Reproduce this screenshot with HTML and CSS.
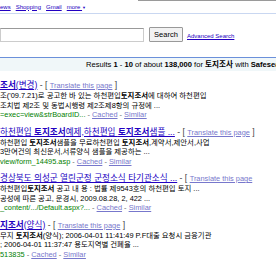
FILE: index.html
```html
<!DOCTYPE html>
<html lang="ko">

<head>
    <meta charset="utf-8">
    <title>토지조사 - Google Search</title>
    <link rel="stylesheet" href="styles.css">
</head>

<body>

    <!-- top links -->
    <div class="gbar">
        <a href="#">ews</a>
        <a href="#">Shopping</a>
        <a href="#">Gmail</a>
        <a href="#" class="more">more <span class="arrow">▼</span></a>
    </div>

    <!-- search box -->
    <form class="search-row" onsubmit="return false">
        <input class="q" type="text" value="">
        <button class="btn" type="submit">Search</button>
        <a href="#" class="adv">Advanced Search</a>
    </form>

    <!-- result count bar -->
    <div class="ssb">
        Results <b>1</b> - <b>10</b> of about <b>138,000</b> for <b>토지조사</b> with <b>Safesea</b>
    </div>

    <!-- results -->
    <ol class="results">
        <li class="res">
            <div class="title"><a href="#"><b>조서</b>(변경)</a> - [ <a href="#" class="fl">Translate this page</a> ]</div>
            <div class="snip">조('09.7.21)로 공고한 바 있는 하천편입<b>토지조서</b>에 대하여 하천편입<br>조치법 제2조 및 동법시행령 제2조제8항의 규정에 ...</div>
            <div class="url"><span class="green">=exec=view&amp;strBoardID...</span> - <a href="#" class="fl">Cached</a> - <a href="#" class="fl">Similar</a></div>
        </li>
        <li class="res">
            <div class="title"><a href="#">하천편입 <b>토지조서</b>예제,하천편입 <b>토지조서</b>샘플 ...</a> - [ <a href="#" class="fl">Translate this page</a> ]</div>
            <div class="snip">하천편입 <b>토지조서</b>샘플을 무료하천편입 <b>토지조서</b>,계약서,제안서,사업<br>3만여건의 최신문서,서류양식 샘플을 제공하는 ...</div>
            <div class="url"><span class="green">view/form_14495.asp</span> - <a href="#" class="fl">Cached</a> - <a href="#" class="fl">Similar</a></div>
        </li>
        <li class="res">
            <div class="title"><a href="#">경상북도 의성군 열린군정 군정소식 타기관소식 ...</a> - [ <a href="#" class="fl">Translate this page</a></div>
            <div class="snip">하천편입<b>토지조서</b> 공고 내 용 : 법률 제9543호의 하천편입 토지 ...<br>공성에 따른 공고, 문경시, 2009.08.28, 2, 422 ...</div>
            <div class="url"><span class="green">_content/.../Default.aspx?...</span> - <a href="#" class="fl">Cached</a> - <a href="#" class="fl">Similar</a></div>
        </li>
        <li class="res">
            <div class="title"><a href="#"><b>지조서</b>(양식)</a> - [ <a href="#" class="fl">Translate this page</a> ]</div>
            <div class="snip">무지 <b>토지조서</b>(양식); 2006-04-01 11:41:49 P.F대출 요청시 금융기관<br>; 2006-04-01 11:37:47 용도지역별 건폐율 ...</div>
            <div class="url"><span class="green">513835</span> - <a href="#" class="fl">Cached</a> - <a href="#" class="fl">Similar</a></div>
        </li>
    </ol>

</body>

</html>
```

FILE: styles.css
```css
* {
    box-sizing: border-box;
}

body {
    margin: 0;
    padding: 0;
    width: 276px;
    height: 260px;
    overflow: hidden;
    background: #fff;
    color: #000;
    font-family: "Liberation Sans", "Noto Sans CJK KR", sans-serif;
}

a {
    color: #2200c1;
}

/* top links */
.gbar {
    height: 14px;
    border-bottom: 1px solid #c9d7f1;
    background: linear-gradient(#9a9a9a, #9a9a9a) no-repeat 138px 0 / 100% 1px;
    display: flex;
    align-items: center;
    gap: 5px;
    font-size: 6px;
    white-space: nowrap;
}

.gbar a {
    color: #2200c1;
}

.gbar .arrow {
    font-size: 4px;
    text-decoration: none;
    display: inline-block;
}

/* search box */
.search-row {
    margin: 13px 0 0;
    display: flex;
    align-items: center;
    height: 15px;
    white-space: nowrap;
}

.q {
    width: 144px;
    height: 14px;
    margin: 0;
    padding: 0;
    border: 1px solid #ccc;
    border-top-color: #999;
}

.btn {
    margin: 0 0 0 5px;
    width: 34px;
    height: 15px;
    padding: 0;
    font-family: "Liberation Sans", sans-serif;
    font-size: 7.5px;
    color: #000;
    background: #f2f2f2;
    border: 1px solid #999;
    border-radius: 1px;
}

.adv {
    margin-left: 4px;
    font-size: 6px;
    padding-top: 2px;
}

/* result count bar */
.ssb {
    margin-top: 15px;
    height: 14px;
    border-top: 1px solid #6b90da;
    background: #f0f7f9;
    padding-left: 86px;
    font-size: 7.6px;
    line-height: 13px;
    white-space: nowrap;
    overflow: hidden;
}

/* results */
.results {
    list-style: none;
    margin: 9px 0 0;
    padding: 0;
    white-space: nowrap;
}

.res {
    margin-bottom: 7px;
}

.title {
    font-size: 8.6px;
    line-height: 10px;
    color: #444;
}

.title .fl {
    font-size: 7.4px;
}

.snip {
    font-size: 7.4px;
    line-height: 9.5px;
}

.url {
    font-size: 7.4px;
    line-height: 9.5px;
    color: #666;
}

.green {
    color: #008000;
}

.fl {
    color: #7777cc;
}
```
